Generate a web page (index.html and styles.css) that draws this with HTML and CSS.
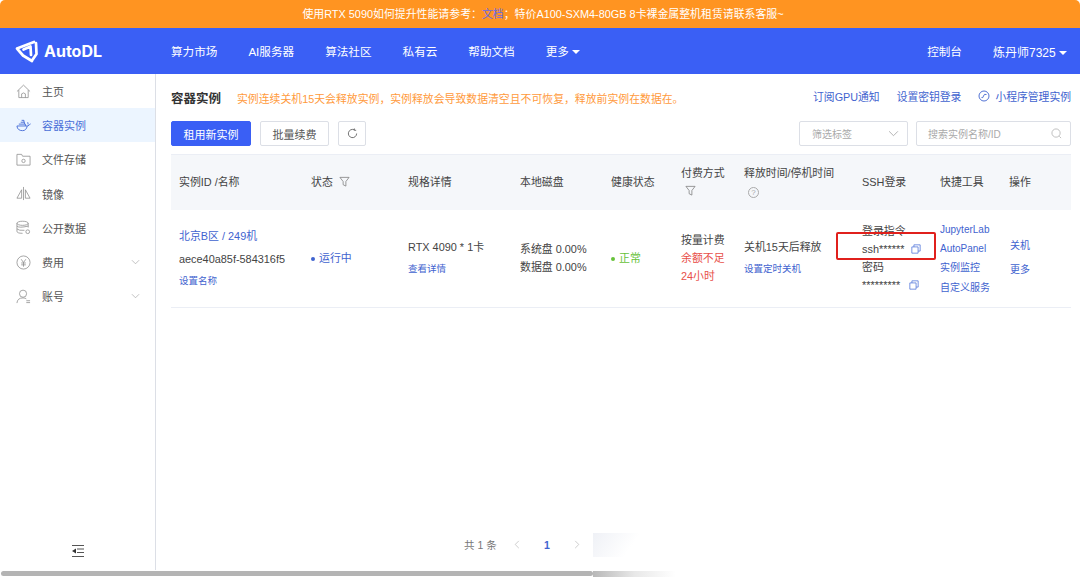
FILE: index.html
```html
<!DOCTYPE html>
<html lang="zh">
<head>
	<meta charset="UTF-8">
	<title>AutoDL</title>
	<link rel="stylesheet" href="styles.css">
</head>
<body>

<div class="notice">使用RTX 5090如何提升性能请参考：<span class="notice-link">文档</span>；特价A100-SXM4-80GB 8卡裸金属整机租赁请联系客服~</div>

<div class="nav">
	<div class="logo">
		<svg width="23" height="23" viewBox="0 0 23 23">
			<path d="M2 8.500 L19 2 M2 8.500 L8 15.500 L17 21 M21 3 L21.500 14 L17 20.500 M8.500 9.500 L15.500 6.500 L16 15" fill="none" stroke="#fff" stroke-width="2.700" stroke-linejoin="round" stroke-linecap="round"/>
		</svg>
		<span class="logo-text">AutoDL</span>
	</div>
	<div class="nav-links">
		<span>算力市场</span>
		<span>AI服务器</span>
		<span>算法社区</span>
		<span>私有云</span>
		<span>帮助文档</span>
		<span>更多 <i class="caret"></i></span>
	</div>
	<div class="nav-right">
		<span>控制台</span>
		<span class="user">炼丹师7325 <i class="caret"></i></span>
	</div>
</div>

<div class="body-wrap">
	<div class="side">
		<div class="side-item">
			<svg class="side-ico" viewBox="0 0 16 16"><path d="M1 8 L8 1.200 L15 8 M3 6.500 V14.500 H13 V6.500 M6 14.500 V10.500 Q8 8.500 10 10.500 V14.500"/></svg>
			主页
		</div>
		<div class="side-item active">
			<svg class="side-ico" viewBox="0 0 16 16"><path d="M1 8.500 H12 Q14 8.500 15.500 6 M1 8.500 Q1.500 13.500 7 13.500 Q11 13.500 12 8.500 M3 6.500 H10 V8.500 M5 4.500 H9 V6.500 M6 2.500 H8.500 V4.500 M12.500 4.500 L13 7"/></svg>
			容器实例
		</div>
		<div class="side-item">
			<svg class="side-ico" viewBox="0 0 16 16"><path d="M1 3 V14 H15 V4.500 H7 L6 2.500 H1 Z"/><circle cx="8" cy="9.500" r="1.800"/></svg>
			文件存储
		</div>
		<div class="side-item">
			<svg class="side-ico" viewBox="0 0 16 16"><path d="M8 1 V15 M6 4 L1 13 H6 Z M10 4 L15 13 H10 Z"/></svg>
			镜像
		</div>
		<div class="side-item">
			<svg class="side-ico" viewBox="0 0 16 16"><ellipse cx="7" cy="3.500" rx="6" ry="2.200"/><path d="M1 3.500 V12 Q1 14.200 7 14.200 M13 3.500 V8 M1 6.500 Q3 8.800 13 6.500 M1 9.500 Q3 11.500 9 11"/><circle cx="12.500" cy="12.500" r="2"/></svg>
			公开数据
		</div>
		<div class="side-item">
			<svg class="side-ico" viewBox="0 0 16 16"><circle cx="8" cy="8" r="7"/><path d="M5.500 4.500 L8 8 L10.500 4.500 M5.500 8.500 H10.500 M5.500 10.500 H10.500 M8 8 V12.500"/></svg>
			费用
			<svg class="side-arrow" viewBox="0 0 10 6"><path d="M1 1 L5 5 L9 1"/></svg>
		</div>
		<div class="side-item">
			<svg class="side-ico" viewBox="0 0 16 16"><circle cx="7.500" cy="5" r="3.800"/><path d="M1 15 Q1.500 9.500 7.500 9.500 Q10 9.500 11 10.500 M11 12.500 H15 M11 14.500 H15"/></svg>
			账号
			<svg class="side-arrow" viewBox="0 0 10 6"><path d="M1 1 L5 5 L9 1"/></svg>
		</div>
		<div class="side-fold">
			<svg width="14" height="14" viewBox="0 0 14 14"><path d="M1 1.500 H13 M6 5 H13 M6 8.500 H13 M1 12.500 H13" stroke="#555" fill="none"/><path d="M1 7 L5 4.500 V9.500 Z" fill="#333"/></svg>
		</div>
	</div>

	<div class="main">
		<div class="head-row">
			<span class="title">容器实例</span>
			<span class="warn">实例连续关机15天会释放实例，实例释放会导致数据清空且不可恢复，释放前实例在数据在。</span>
			<div class="head-links">
				<span>订阅GPU通知</span>
				<span>设置密钥登录</span>
				<span class="mini">
					<svg width="12" height="12" viewBox="0 0 12 12"><circle cx="6" cy="6" r="5" fill="none" stroke="#3f63cf" stroke-width=".9"/><path d="M3.500 7.500 Q5 8.500 5.500 6 Q6 3.500 8.500 4.500" fill="none" stroke="#3f63cf" stroke-width=".9"/></svg>
					小程序管理实例
				</span>
			</div>
		</div>

		<div class="tool-row">
			<button class="btn btn-primary">租用新实例</button>
			<button class="btn btn-batch">批量续费</button>
			<button class="btn btn-icon">
				<svg width="11" height="11" viewBox="0 0 12 12"><path d="M10.500 6 A4.500 4.500 0 1 1 8 2 M8 .5 V2.500 H10" fill="none" stroke="#666"/></svg>
			</button>
			<div class="filters">
				<div class="field field-select">筛选标签
					<svg width="11" height="7" viewBox="0 0 10 6"><path d="M1 1 L5 5 L9 1" fill="none" stroke="#aaa" stroke-width=".8"/></svg>
				</div>
				<div class="field field-search">搜索实例名称/ID
					<svg width="11" height="11" viewBox="0 0 12 12"><circle cx="5.500" cy="5.500" r="4.500" fill="none" stroke="#aaa" stroke-width=".8"/><path d="M9 9 L11 11" stroke="#aaa" stroke-width=".8"/></svg>
				</div>
			</div>
		</div>

		<table class="grid">
			<colgroup>
				<col class="c1"><col class="c2"><col class="c3"><col class="c4"><col class="c5">
				<col class="c6"><col class="c7"><col class="c8"><col class="c9"><col class="c10">
			</colgroup>
			<thead>
				<tr>
					<th>实例ID /名称</th>
					<th>状态 <svg class="filter-ico" viewBox="0 0 12 12"><path d="M1 1.500 H11 L7.500 6 V11 L4.500 9.500 V6 Z"/></svg></th>
					<th>规格详情</th>
					<th>本地磁盘</th>
					<th>健康状态</th>
					<th>付费方式<br><svg class="filter-ico first" viewBox="0 0 12 12"><path d="M1 1.500 H11 L7.500 6 V11 L4.500 9.500 V6 Z"/></svg></th>
					<th>释放时间/停机时间<br><span class="help">?</span></th>
					<th>SSH登录</th>
					<th>快捷工具</th>
					<th>操作</th>
				</tr>
			</thead>
			<tbody>
				<tr>
					<td>
						<div class="link l-name">北京B区 / 249机</div>
						<div class="l-id">aece40a85f-584316f5</div>
						<div class="link small">设置名称</div>
					</td>
					<td class="running"><i class="dot"></i>运行中</td>
					<td>
						<div class="l-spec">RTX 4090 * 1卡</div>
						<div class="link small">查看详情</div>
					</td>
					<td>系统盘 0.00%<br>数据盘 0.00%</td>
					<td class="ok"><i class="dot"></i>正常</td>
					<td>按量计费<br><span class="red">余额不足<br>24小时</span></td>
					<td>
						<div class="l-spec">关机15天后释放</div>
						<div class="link small">设置定时关机</div>
					</td>
					<td class="ssh">
						<div>登录指令</div>
						<div class="ssh-line ssh-first">ssh******
							<svg class="copy" viewBox="0 0 12 12"><path d="M1 3.500 H8.500 V11 H1 Z M3.500 3.500 V1 H11 V8.500 H8.500"/></svg>
						</div>
						<div>密码</div>
						<div class="ssh-line">*********
							<svg class="copy" viewBox="0 0 12 12"><path d="M1 3.500 H8.500 V11 H1 Z M3.500 3.500 V1 H11 V8.500 H8.500"/></svg>
						</div>
						<div class="red-box"></div>
					</td>
					<td class="tools link">
						<div>JupyterLab</div>
						<div>AutoPanel</div>
						<div>实例监控</div>
						<div>自定义服务</div>
					</td>
					<td class="ops link">
						<div>关机</div>
						<div>更多</div>
					</td>
				</tr>
			</tbody>
		</table>

		<div class="pager">
			<span class="total">共 1 条</span>
			<svg class="pg-arrow" viewBox="0 0 6 10"><path d="M5 1 L1 5 L5 9"/></svg>
			<b class="pg-num">1</b>
			<svg class="pg-arrow" viewBox="0 0 6 10"><path d="M1 1 L5 5 L1 9"/></svg>
		</div>
	</div>
</div>

<div class="scroll-track"><div class="scroll-thumb"></div></div>
<div class="fade"></div>

</body>
</html>
```

FILE: styles.css
```css
* {
	box-sizing: border-box;
}
html, body {
	margin: 0;
	height: 100%;
}
body {
	height: 577px;
	overflow: hidden;
	display: flex;
	flex-direction: column;
	position: relative;
	background: #fff;
	color: #444;
	font-family: "Liberation Sans", "Noto Sans CJK SC", sans-serif;
	font-size: 11px;
}

/* bandeau du haut */
.notice {
	height: 28px;
	line-height: 28px;
	flex: none;
	background: #ff9421;
	color: #fff;
	text-align: center;
	padding-left: 6px;
	border-radius: 5px 5px 0 0;
	font-size: 10.900px;
}
.notice-link {
	color: #6a6ae0;
}

.nav {
	height: 46px;
	flex: none;
	background: #3a5ff5;
	color: #fff;
	display: flex;
	align-items: center;
	font-size: 11.600px;
	padding-right: 13px;
}
.logo {
	width: 171px;
	padding-left: 15px;
	display: flex;
	align-items: center;
	gap: 6px;
	flex: none;
}
.logo-text {
	font-size: 16px;
	font-weight: bold;
	font-family: "Inter", "Liberation Sans", sans-serif;
}
.nav-links {
	display: flex;
	gap: 31px;
}
.nav-right {
	margin-left: auto;
	display: flex;
	gap: 31px;
}
.user {
	font-size: 12px;
}
.caret {
	display: inline-block;
	border: 4px solid transparent;
	border-top: 4px solid #fff;
	border-bottom: 0;
	vertical-align: 2px;
}

.body-wrap {
	flex: 1;
	display: flex;
	min-height: 0;
}

/* menu de gauche */
.side {
	width: 156px;
	flex: none;
	border-right: 1px solid #dcdfe6;
	display: flex;
	flex-direction: column;
}
.side-item {
	height: 34.200px;
	flex: none;
	display: flex;
	align-items: center;
	padding-left: 16px;
	gap: 11px;
	color: #555;
}
.side-item.active {
	background: #ecf5ff;
	color: #4a6fd8;
}
.side-ico {
	width: 15px;
	height: 15px;
	fill: none;
	stroke: #8a8a8a;
	stroke-width: .8;
}
.active .side-ico {
	stroke: #4a6fd8;
	stroke-width: 1;
}
.side-arrow {
	width: 9px;
	height: 6px;
	margin-left: auto;
	margin-right: 15px;
	fill: none;
	stroke: #aaa;
	stroke-width: .8;
}
.side-fold {
	margin-top: auto;
	height: 26px;
	display: flex;
	justify-content: center;
}

.main {
	flex: 1;
	min-width: 0;
	padding: 0 9px 0 15px;
	display: flex;
	flex-direction: column;
}
.head-row {
	display: flex;
	align-items: center;
	height: 47px;
}
.title {
	font-size: 12.500px;
	font-weight: bold;
	color: #333;
	width: 66px;
}
.warn {
	color: #ff9a3c;
	font-size: 10.860px;
}
.head-links {
	margin-left: auto;
	display: flex;
	gap: 17px;
	color: #3f63cf;
	font-size: 10.800px;
	margin-top: -3px;
}
.mini {
	display: flex;
	align-items: center;
	gap: 5px;
}

.tool-row {
	height: 33px;
	display: flex;
	align-items: flex-start;
	gap: 9px;
}
.btn {
	height: 25px;
	width: 80px;
	border: 1px solid #dcdfe6;
	border-radius: 2px;
	background: #fff;
	color: #555;
	font: inherit;
	font-size: 11px;
	padding: 0;
}
.btn-primary {
	background: #3a5ff5;
	border-color: #3a5ff5;
	color: #fff;
}
.btn-batch {
	width: 69px;
}
.btn-icon {
	width: 28px;
	display: flex;
	align-items: center;
	justify-content: center;
}
.filters {
	margin-left: auto;
	display: flex;
	gap: 8px;
}
.field {
	height: 25px;
	border: 1px solid #dcdfe6;
	border-radius: 2px;
	color: #aaa;
	font-size: 10px;
	display: flex;
	align-items: center;
	justify-content: space-between;
	padding: 0 8px 0 12px;
}
.field-select {
	width: 109px;
}
.field-search {
	width: 155px;
	padding-left: 11px;
}

/* tableau */
.grid {
	width: 900px;
	table-layout: fixed;
	border-collapse: collapse;
	font-size: 10.900px;
}
.c1 { width: 132px; }
.c2 { width: 97px; }
.c3 { width: 112px; }
.c4 { width: 91px; }
.c5 { width: 70px; }
.c6 { width: 63px; }
.c7 { width: 118px; }
.c8 { width: 78px; }
.c9 { width: 69px; }
.c10 { width: 70px; }
.grid th {
	height: 55px;
	background: #f5f7fa;
	font-weight: normal;
	text-align: left;
	color: #444;
	padding: 0 8px;
	line-height: 18px;
	border-top: 1px solid #ebeef5;
}
.grid td {
	height: 98px;
	padding: 0 8px;
	border-bottom: 1px solid #ebeef5;
	vertical-align: middle;
	line-height: 18px;
}
.filter-ico {
	width: 11px;
	height: 11px;
	fill: none;
	stroke: #777;
	stroke-width: .8;
	vertical-align: -1px;
	margin-left: 3px;
}
.filter-ico.first {
	margin-left: 4px;
}
.help {
	display: inline-block;
	width: 11px;
	height: 11px;
	border: 1px solid #aaa;
	border-radius: 50%;
	color: #aaa;
	font-size: 8px;
	line-height: 9px;
	text-align: center;
	margin-left: 4px;
}
.link {
	color: #3f63cf;
}
.small {
	font-size: 9.500px;
}
.l-name {
	margin-bottom: 5px;
}
.l-id {
	margin-bottom: 4px;
	padding-bottom: 0;
}
.l-spec {
	margin-bottom: 4px;
}
.running {
	color: #3f63cf;
}
.ok {
	color: #67c23a;
}
.dot {
	display: inline-block;
	width: 4px;
	height: 4px;
	border-radius: 50%;
	background: currentColor;
	margin-right: 4px;
	vertical-align: 1px;
}
.red {
	color: #e8504a;
}
.ssh {
	position: relative;
}
.ssh-line {
	display: flex;
	align-items: center;
	gap: 9px;
}
.ssh-first {
	gap: 7px;
}
.copy {
	width: 10px;
	height: 10px;
	fill: none;
	stroke: #4a6fd8;
	stroke-width: .9;
}
.red-box {
	position: absolute;
	left: -18px;
	top: 22px;
	width: 100px;
	height: 28px;
	border: 2px solid #e0201c;
	border-radius: 2px;
}
.grid .tools {
	font-size: 10px;
	line-height: 19.300px;
}
.grid .ops {
	font-size: 10px;
	line-height: 24px;
	padding-left: 9px;
}

.pager {
	margin-top: auto;
	height: 51px;
	display: flex;
	align-items: center;
	padding-left: 293px;
	color: #777;
	font-size: 10.500px;
}
.total {
	width: 50px;
}
.pg-arrow {
	width: 6px;
	height: 9px;
	fill: none;
	stroke: #bbb;
	stroke-width: .8;
}
.pg-num {
	width: 54px;
	text-align: center;
	color: #3f63cf;
}

.scroll-track {
	height: 7px;
	flex: none;
	padding: 1px 0 0 1px;
}
.scroll-thumb {
	width: 592px;
	height: 5px;
	border-radius: 3px;
	background: #b4b4b4;
}
.fade {
	position: absolute;
	left: 593px;
	top: 533px;
	width: 92px;
	height: 44px;
	background:
		linear-gradient(125deg, #eff1f6, #fff 55%) no-repeat 0 0 / 70px 24px,
		linear-gradient(90deg, #b8b8b8, #e8e8e8 45%, #fff 90%) no-repeat 0 100% / 100% 6px;
}
```
